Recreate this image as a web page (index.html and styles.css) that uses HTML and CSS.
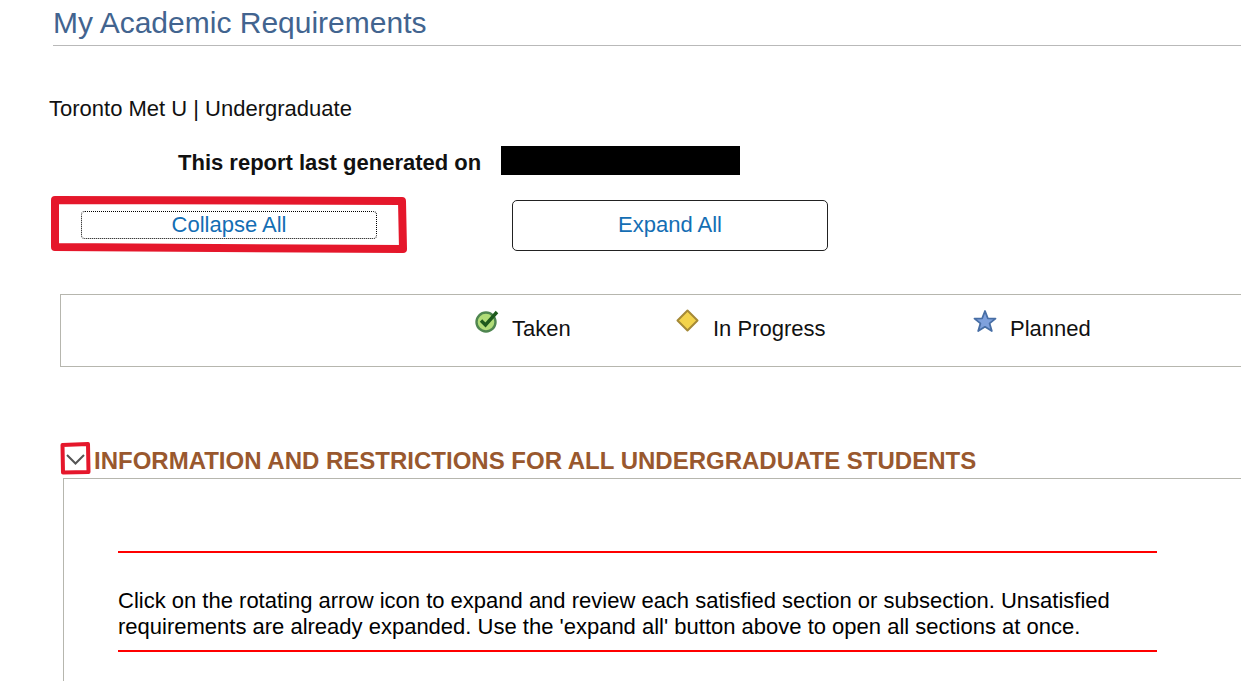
FILE: index.html
```html
<!DOCTYPE html>
<html lang="en">
<head>
  <meta charset="utf-8">
  <title>My Academic Requirements</title>
  <link rel="stylesheet" href="styles.css">
</head>
<body>
<main class="page">
  <h1 class="page-title">My Academic Requirements</h1>

  <p class="career">Toronto Met U | Undergraduate</p>

  <div class="report-date">
    <span class="report-label">This report last generated on</span>
    <span class="redacted"></span>
  </div>

  <div class="actions">
    <div class="marked">
      <button type="button" class="btn btn-focused">Collapse All</button>
      <svg class="marker" viewBox="0 0 356 57" aria-hidden="true">
        <path d="M4 4 L351 5 L352 53 L4 51 Z" fill="none" stroke="#e5172b" stroke-width="8" stroke-linejoin="round"/>
      </svg>
    </div>
    <button type="button" class="btn">Expand All</button>
  </div>

  <ul class="legend">
    <li>
      <svg class="icon" viewBox="0 0 24 24" aria-hidden="true">
        <circle cx="11" cy="13" r="9.5" fill="#b0dc78" stroke="#4f8650" stroke-width="2.4"/>
        <path d="M6 11.5 L10.5 16 L22 3" fill="none" stroke="#1d5a1c" stroke-width="3.4"/>
      </svg>
      Taken
    </li>
    <li>
      <svg class="icon" viewBox="0 0 24 24" aria-hidden="true">
        <path d="M11.5 1.5 L21.5 11.5 L11.5 21.5 L1.5 11.5 Z" fill="#f3d34c" stroke="#a58a37" stroke-width="2" stroke-linejoin="round"/>
      </svg>
      In Progress
    </li>
    <li>
      <svg class="icon" viewBox="0 0 24 24" aria-hidden="true">
        <path d="M12 2 L14.8 9.3 L22.5 9.6 L16.6 14.4 L18.8 22 L12 17.8 L5.2 22 L7.4 14.4 L1.5 9.6 L9.2 9.3 Z" fill="#7fa1dc" stroke="#476ea5" stroke-width="1.8" stroke-linejoin="round"/>
      </svg>
      Planned
    </li>
  </ul>

  <section>
    <h2 class="section-title">
      <button type="button" class="toggle" aria-label="Collapse section">
        <svg viewBox="0 0 31 33" aria-hidden="true">
          <path d="M2.5 3 L28 2 L28.5 30 L3 30.5 Z" fill="none" stroke="#e5172b" stroke-width="4" stroke-linejoin="round"/>
          <path d="M7 13 L15.5 21.5 L24 13" fill="none" stroke="#555" stroke-width="2"/>
        </svg>
      </button>
      <span class="section-name">INFORMATION AND RESTRICTIONS FOR ALL UNDERGRADUATE STUDENTS</span>
    </h2>
    <div class="section-body">
      <p class="notice">Click on the rotating arrow icon to expand and review each satisfied section or subsection. Unsatisfied requirements are already expanded. Use the 'expand all' button above to open all sections at once.</p>
    </div>
  </section>
</main>
</body>
</html>
```
FILE: styles.css
```css
body {
  margin: 0;
  background: #fff;
  color: #111;
  font: 22px/26px "Liberation Sans", Arial, sans-serif;
}
.page {
  display: flex;
  flex-direction: column;
  min-height: 100vh;
  overflow-x: hidden;
}
.page-title {
  margin: 0 0 0 53px;
  padding: 5px 0 4px;
  border-bottom: 1px solid #b9b9b9;
  color: #42648f;
  font-size: 30px;
  font-weight: normal;
  line-height: 36px;
}
.career {
  margin: 50px 0 0 49px;
}
.report-date {
  display: flex;
  align-items: flex-start;
  gap: 20px;
  margin: 24px 0 0 178px;
  font-weight: bold;
}
.report-label {
  padding-top: 4px;
}
.redacted {
  width: 239px;
  height: 29px;
  background: #000;
}
.actions {
  display: flex;
  gap: 125px;
  margin: 24px 0 0 71px;
}
.btn {
  box-sizing: border-box;
  width: 316px;
  height: 51px;
  padding: 0 0 2px;
  border: 1px solid #222;
  border-radius: 5px;
  background: #fff;
  color: #146eb4;
  font: inherit;
  cursor: pointer;
}
.marked {
  position: relative;
}
.btn-focused {
  position: relative;
  border-color: transparent;
}
.btn-focused::before {
  content: "";
  position: absolute;
  inset: 10px 9px 11px;
  border: 1px dotted #000;
  border-radius: 4px;
}
/* hand-drawn highlight around the button */
.marker {
  position: absolute;
  top: -4px;
  left: -20px;
  width: 356px;
  height: 57px;
  pointer-events: none;
}
.legend {
  display: grid;
  grid-template-columns: 414fr 201fr 297fr 269fr;
  margin: 43px -2px 0 60px;
  padding: 14px 0 24px;
  border: 1px solid #b6b6ae;
  list-style: none;
}
.legend li {
  display: flex;
  gap: 13px;
  line-height: 40px;
  height: 33px;
}
.legend li:first-child {
  grid-column: 2;
}
.icon {
  width: 24px;
  height: 24px;
}
.section-title {
  display: flex;
  align-items: center;
  gap: 3px;
  margin: 75px 0 3px 60px;
  color: #99582e;
  font-size: 24px;
  line-height: 28px;
}
.section-name {
  padding-top: 4px;
}
.toggle {
  width: 31px;
  height: 33px;
  padding: 0;
  border: 0;
  background: none;
  cursor: pointer;
}
.toggle svg {
  display: block;
}
.section-body {
  margin-left: 63px;
  padding: 72px 84px 29px 54px;
  border: 1px solid #b6b6ae;
  border-width: 1px 0 0 1px;
}
.notice {
  margin: 0;
  padding: 35px 0 10px;
  border: solid #f00;
  border-width: 2px 0;
  color: #000;
}
```
